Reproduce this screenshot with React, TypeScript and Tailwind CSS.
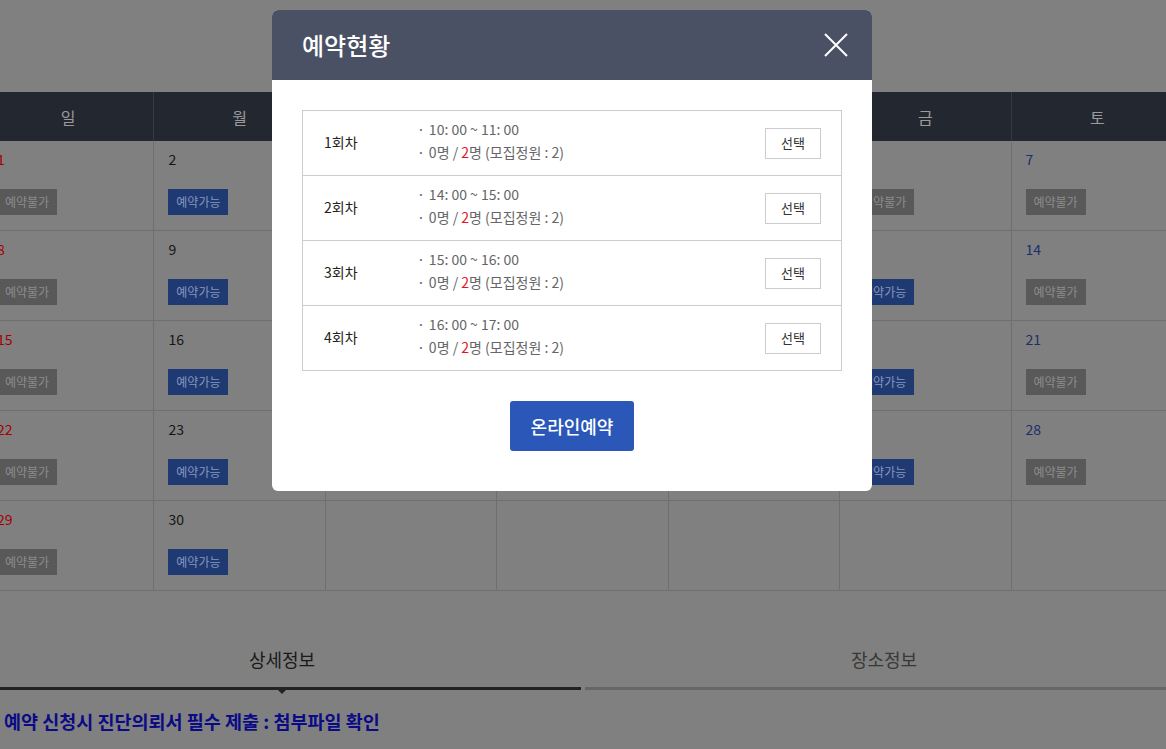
import React from "react";

type Cell = { d?: number; s?: "off" | "on" };

const weeks: Cell[][] = [
  [{ d: 1, s: "off" }, { d: 2, s: "on" }, { d: 3, s: "on" }, { d: 4, s: "on" }, { d: 5, s: "on" }, { d: 6, s: "off" }, { d: 7, s: "off" }],
  [{ d: 8, s: "off" }, { d: 9, s: "on" }, { d: 10, s: "on" }, { d: 11, s: "on" }, { d: 12, s: "on" }, { d: 13, s: "on" }, { d: 14, s: "off" }],
  [{ d: 15, s: "off" }, { d: 16, s: "on" }, { d: 17, s: "on" }, { d: 18, s: "on" }, { d: 19, s: "on" }, { d: 20, s: "on" }, { d: 21, s: "off" }],
  [{ d: 22, s: "off" }, { d: 23, s: "on" }, { d: 24, s: "on" }, { d: 25, s: "on" }, { d: 26, s: "on" }, { d: 27, s: "on" }, { d: 28, s: "off" }],
  [{ d: 29, s: "off" }, { d: 30, s: "on" }, {}, {}, {}, {}, {}],
];

const days = ["일", "월", "화", "수", "목", "금", "토"];

const sessions = [
  { n: "1회차", t: "10: 00 ~ 11: 00" },
  { n: "2회차", t: "14: 00 ~ 15: 00" },
  { n: "3회차", t: "15: 00 ~ 16: 00" },
  { n: "4회차", t: "16: 00 ~ 17: 00" },
];

function DateNum({ d, col }: { d: number; col: number }) {
  const color = col === 0 ? "text-[#a50000]" : col === 6 ? "text-[#1d2f6b]" : "text-[#151515]";
  return <div className={`text-[14px] leading-[18px] ${color}`}>{d}</div>;
}

export default function App() {
  return (
    <div className="relative h-[749px] w-full overflow-hidden bg-[#808080] font-['Noto_Sans_CJK_KR','Noto_Sans',sans-serif]">
      <div className="flex justify-center">
        <div className="w-[1200px] shrink-0 pt-[92px]">
          {/* calendar header */}
          <div className="grid h-[49px] grid-cols-7 bg-[#23272f]">
            {days.map((d, i) => (
              <div
                key={d}
                className={`flex items-center justify-center text-[16px] text-[#9a9a9a] ${i < 6 ? "border-r border-[#363a43]" : ""}`}
              >
                {d}
              </div>
            ))}
          </div>
          {/* calendar body */}
          {weeks.map((w, wi) => (
            <div key={wi} className="grid h-[90px] grid-cols-7 border-b border-[#6f6f6f]">
              {w.map((c, ci) => (
                <div
                  key={ci}
                  className={`flex flex-col pl-[14px] pt-[9px] ${ci < 6 ? "border-r border-[#6f6f6f]" : ""}`}
                >
                  {c.d !== undefined && <DateNum d={c.d} col={ci} />}
                  {c.s && (
                    <div
                      className={`mt-[21px] flex h-[26px] w-[60px] items-center justify-center text-[12px] ${
                        c.s === "on" ? "bg-[#1f3a73] text-[#8796bd]" : "bg-[#595959] text-[#8c8c8c]"
                      }`}
                    >
                      {c.s === "on" ? "예약가능" : "예약불가"}
                    </div>
                  )}
                </div>
              ))}
            </div>
          ))}
          {/* tabs */}
          <div className="mt-[40px] flex gap-[4px]">
            <div className="relative flex h-[59px] flex-1 items-center justify-center border-b-[3px] border-[#222222] text-[18px] text-[#1a1a1a]">
              상세정보
              <div className="absolute left-1/2 top-full h-0 w-0 -translate-x-1/2 border-x-[7px] border-t-[7px] border-x-transparent border-t-[#222222]" />
            </div>
            <div className="flex h-[59px] flex-1 items-center justify-center border-b-[3px] border-[#666666] text-[18px] text-[#383838]">
              장소정보
            </div>
          </div>
          <div className="pl-[21px] pt-[18px] text-[18.5px] font-bold leading-[26px] text-[#0b0b85]">
            예약 신청시 진단의뢰서 필수 제출 : 첨부파일 확인
          </div>
        </div>
      </div>

      {/* modal */}
      <div className="absolute left-[272px] top-[10px] w-[600px] overflow-hidden rounded-[6px] bg-white">
        <div className="flex h-[70px] items-center justify-between bg-[#4b5164] pl-[30px] pr-[22px]">
          <div className="text-[24px] font-medium text-white">예약현황</div>
          <svg width="28" height="28" viewBox="0 0 28 28" fill="none" stroke="white" strokeWidth="2">
            <path d="M3 3 L25 25 M25 3 L3 25" />
          </svg>
        </div>
        <div className="flex flex-col items-center px-[30px] pb-[40px] pt-[30px]">
          <div className="w-full border border-[#cccccc]">
            {sessions.map((s, i) => (
              <div
                key={s.n}
                className={`flex items-center pl-[21px] pr-[20px] ${i > 0 ? "h-[65px] border-t border-[#cccccc]" : "h-[64px]"}`}
              >
                <div className="w-[93px] pb-[2px] text-[14px] text-[#222222]">{s.n}</div>
                <div className="flex-1 pb-[4px] text-[14px] leading-[23px] text-[#666666]">
                  <div>
                    <span className="mr-[4px]">·</span>
                    {s.t}
                  </div>
                  <div>
                    <span className="mr-[4px]">·</span>0명 / <span className="text-[#e3151f]">2</span>명 (모집정원 : 2)
                  </div>
                </div>
                <div className="flex h-[31px] w-[56px] items-center justify-center border border-[#cccccc] text-[13px] text-[#333333]">
                  선택
                </div>
              </div>
            ))}
          </div>
          <div className="mt-[30px] flex h-[50px] w-[124px] items-center justify-center rounded-[3px] bg-[#2a57b8] text-[18px] font-medium text-white">
            온라인예약
          </div>
        </div>
      </div>
    </div>
  );
}
